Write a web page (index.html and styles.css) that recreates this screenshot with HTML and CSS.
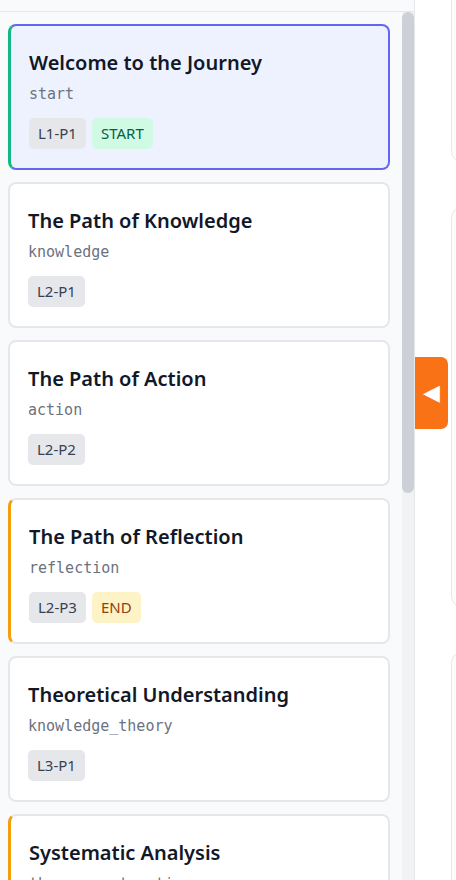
FILE: index.html
```html
<!DOCTYPE html>
<html lang="en">
<head>
<meta charset="utf-8">
<title>Story Nodes</title>
<link rel="stylesheet" href="styles.css">
</head>
<body>
<div class="app">
  <aside class="sidebar">
    <div class="sidebar-head"></div>
    <div class="sidebar-body">
      <div class="node-list">
        <div class="node node-selected node-start">
          <div class="node-title">Welcome to the Journey</div>
          <div class="node-id">start</div>
          <div class="node-tags"><span class="tag">L1-P1</span><span class="tag tag-start">START</span></div>
        </div>
        <div class="node">
          <div class="node-title">The Path of Knowledge</div>
          <div class="node-id">knowledge</div>
          <div class="node-tags"><span class="tag">L2-P1</span></div>
        </div>
        <div class="node">
          <div class="node-title">The Path of Action</div>
          <div class="node-id">action</div>
          <div class="node-tags"><span class="tag">L2-P2</span></div>
        </div>
        <div class="node node-end">
          <div class="node-title">The Path of Reflection</div>
          <div class="node-id">reflection</div>
          <div class="node-tags"><span class="tag">L2-P3</span><span class="tag tag-end">END</span></div>
        </div>
        <div class="node">
          <div class="node-title">Theoretical Understanding</div>
          <div class="node-id">knowledge_theory</div>
          <div class="node-tags"><span class="tag">L3-P1</span></div>
        </div>
        <div class="node node-end">
          <div class="node-title">Systematic Analysis</div>
          <div class="node-id">theory_systematic</div>
          <div class="node-tags"><span class="tag">L4-P1</span><span class="tag tag-end">END</span></div>
        </div>
      </div>
      <div class="scrollbar"><div class="scroll-thumb"></div></div>
    </div>
  </aside>
  <main class="canvas">
    <button class="collapse" type="button">◀</button>
    <div class="panel-stack">
      <section class="panel panel-a"></section>
      <section class="panel panel-b"></section>
      <section class="panel panel-c"></section>
    </div>
  </main>
</div>
</body>
</html>
```
FILE: styles.css
```css
* { box-sizing: border-box; }
html, body { margin: 0; padding: 0; height: 100%; }
body {
  font-family: "Noto Sans", "Open Sans", sans-serif;
  background: #ffffff;
  color: #111827;
  overflow: hidden;
}
.app {
  display: flex;
  height: 880px;
}
.sidebar {
  width: 415px;
  flex: none;
  display: flex;
  flex-direction: column;
  background: #f9fafb;
  border-right: 1px solid #e5e7eb;
}
.sidebar-head {
  height: 12px;
  flex: none;
  border-bottom: 1px solid #e5e7eb;
}
.sidebar-body {
  flex: 1;
  min-height: 0;
  display: flex;
}
.node-list {
  flex: 1;
  min-width: 0;
  overflow: hidden;
  padding: 12px 12px 12px 8px;
  display: flex;
  flex-direction: column;
  gap: 12px;
}
.scrollbar {
  width: 12px;
  flex: none;
  background: #f1f2f4;
}
.scroll-thumb {
  height: 481px;
  background: #cdd0d7;
  border-radius: 6px;
}
.node {
  flex: none;
  height: 146px;
  background: #ffffff;
  border: 2px solid #e5e7eb;
  border-radius: 8px;
  padding: 22px 18px 18px;
}
.node-selected {
  background: #eef2ff;
  border-color: #6366f1;
}
.node-start { border-left: 3px solid #10b981; }
.node-end { border-left: 3px solid #f59e0b; }
.node-title {
  font-size: 20px;
  font-weight: 600;
  line-height: 30px;
  color: #111827;
  white-space: nowrap;
}
.node-id {
  margin-top: 6px;
  font-family: "DejaVu Sans Mono", "Liberation Mono", monospace;
  font-size: 15px;
  line-height: 20px;
  color: #6b7280;
}
.node-tags {
  margin-top: 14px;
  display: flex;
  gap: 6px;
}
.tag {
  font-size: 15px;
  line-height: 21px;
  padding: 5px 9px;
  border-radius: 5px;
  background: #e5e7eb;
  color: #374151;
}
.tag-start { background: #d1fae5; color: #065f46; }
.tag-end { background: #fef3c7; color: #92400e; }
.canvas {
  flex: 1;
  position: relative;
  overflow: hidden;
  background: #ffffff;
}
.collapse {
  position: absolute;
  left: 0;
  top: 357px;
  width: 33px;
  height: 72px;
  border: none;
  padding: 0;
  margin: 0;
  background: #f97316;
  color: #ffffff;
  border-radius: 0 7px 7px 0;
  font-family: "DejaVu Sans", sans-serif;
  font-size: 22px;
  line-height: 72px;
  text-align: center;
  z-index: 2;
}
.panel-stack {
  margin-top: -40px;
  padding-left: 36px;
  display: flex;
  flex-direction: column;
  gap: 43px;
}
.panel {
  width: 400px;
  background: #fcfcfd;
  border: 1px solid #e5e7eb;
  border-radius: 12px;
  flex: none;
}
.panel-a { height: 203px; }
.panel-b { height: 402px; }
.panel-c { height: 400px; }
```
